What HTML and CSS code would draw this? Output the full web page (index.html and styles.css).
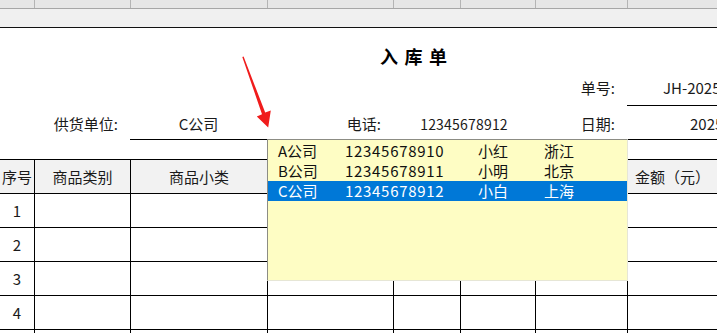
FILE: index.html
```html
<!DOCTYPE html>
<html lang="zh">
<head>
<meta charset="utf-8">
<title>入库单</title>
<link rel="stylesheet" href="styles.css">
</head>
<body>
<div class="sheet">
  <div class="colhead">
    <div class="ch"><span>C</span></div>
    <div class="ch"><span>D</span></div>
    <div class="ch"><span>E</span></div>
    <div class="ch"><span>F</span></div>
    <div class="ch"><span>G</span></div>
    <div class="ch"><span>H</span></div>
    <div class="ch"><span>I</span></div>
    <div class="ch"><span>J</span></div>
  </div>
  <div class="strip"></div>

  <div class="form">
    <div class="title-row"><span class="title">入库单</span></div>
    <div class="frow r-no">
      <div class="fc span6"></div>
      <div class="fc label">单号:</div>
      <div class="fc value line val-no">JH-20250101-001</div>
    </div>
    <div class="frow r-sup">
      <div class="fc label span2">供货单位:</div>
      <div class="fc value line center">C公司</div>
      <div class="fc label">电话:</div>
      <div class="fc value line center span2 digits">12345678912</div>
      <div class="fc label">日期:</div>
      <div class="fc value line val-date">2025-01-01</div>
    </div>
    <div class="gap"></div>
  </div>

  <div class="table">
    <div class="th">序号</div>
    <div class="th">商品类别</div>
    <div class="th">商品小类</div>
    <div class="th"></div>
    <div class="th"></div>
    <div class="th"></div>
    <div class="th"></div>
    <div class="th">金额（元）</div>

    <div class="td num">1</div><div class="td"></div><div class="td"></div><div class="td"></div><div class="td"></div><div class="td"></div><div class="td"></div><div class="td"></div>
    <div class="td num">2</div><div class="td"></div><div class="td"></div><div class="td"></div><div class="td"></div><div class="td"></div><div class="td"></div><div class="td"></div>
    <div class="td num">3</div><div class="td"></div><div class="td"></div><div class="td"></div><div class="td"></div><div class="td"></div><div class="td"></div><div class="td"></div>
    <div class="td num">4</div><div class="td"></div><div class="td"></div><div class="td"></div><div class="td"></div><div class="td"></div><div class="td"></div><div class="td"></div>
    <div class="td num">5</div><div class="td"></div><div class="td"></div><div class="td"></div><div class="td"></div><div class="td"></div><div class="td"></div><div class="td"></div>
  </div>

  <div class="popup">
    <div class="prow"><span class="p-co">A公司</span><span class="p-tel">12345678910</span><span class="p-name">小红</span><span class="p-city">浙江</span></div>
    <div class="prow"><span class="p-co">B公司</span><span class="p-tel">12345678911</span><span class="p-name">小明</span><span class="p-city">北京</span></div>
    <div class="prow selected"><span class="p-co">C公司</span><span class="p-tel">12345678912</span><span class="p-name">小白</span><span class="p-city">上海</span></div>
  </div>

  <svg class="arrow" width="40" height="80" viewBox="0 0 40 80">
    <polygon points="6.3,5 7.6,4.6 29.2,60.6 34.8,58.6 32.2,75.5 20.8,64.4 26.0,62.3" fill="#f01c1c"/>
  </svg>
</div>
</body>
</html>
```

FILE: styles.css
```css
* { box-sizing: border-box; }

html, body {
  margin: 0;
  padding: 0;
  background: #ffffff;
}

body {
  font-family: "Noto Sans CJK SC", "Noto Sans", sans-serif;
  font-size: 15px;
  color: #1a1a1a;
}

.sheet {
  --cols: 34px 96px 137px 126px 67px 75px 92px 90px;
  position: relative;
  width: 717px;
  height: 333px;
  overflow: hidden;
}

/* column header (cut off at the top) */
.colhead {
  display: grid;
  grid-template-columns: var(--cols);
  height: 9px;
  background: #e6e6e6;
  border-bottom: 1px solid #a6a6a6;
}

.ch {
  overflow: hidden;
  text-align: center;
  border-left: 1px solid #b4b4b4;
  color: #333;
  font-family: "Liberation Sans", sans-serif;
  font-size: 15px;
}

.ch:first-child { border-left: none; }

.ch span {
  display: block;
  line-height: 20px;
  margin-top: -15px;
}

.strip {
  height: 19px;
  background: #f0f0f0;
  border-bottom: 1px solid #111;
}

/* form area */
.title-row {
  height: 47px;
  padding-top: 17px;
  padding-left: 380px;
}

.title {
  display: block;
  font-size: 18px;
  font-weight: 700;
  line-height: 22px;
  letter-spacing: 6.5px;
  color: #000;
}

.frow {
  display: grid;
  grid-template-columns: var(--cols);
}

.r-no { height: 31px; }
.r-sup { height: 34px; }

.fc {
  white-space: nowrap;
  overflow: hidden;
  line-height: 20px;
  align-self: stretch;
  display: flex;
  align-items: flex-end;
}

.r-no .fc { padding-bottom: 8px; }
.r-sup .fc { padding-bottom: 6px; }

.span2 { grid-column: span 2; }
.span6 { grid-column: span 6; }

.label {
  justify-content: flex-end;
  padding-right: 12px;
}

.center { justify-content: center; }

.digits {
  font-size: 14px;
  letter-spacing: 0.2px;
}

.line { border-bottom: 1px solid #000; }

.r-no .line { padding-bottom: 7px; }
.r-sup .line { padding-bottom: 5px; }

.val-no { padding-left: 36px; }
.val-date { padding-left: 63px; }

.gap { height: 19px; }

/* table */
.table {
  display: grid;
  grid-template-columns: var(--cols);
  grid-auto-rows: 34px;
  border-top: 1px solid #000;
}

.th, .td {
  border-left: 1px solid #000;
  border-bottom: 1px solid #000;
  display: flex;
  align-items: center;
  justify-content: center;
  white-space: nowrap;
  overflow: hidden;
}

.th { background: #f2f2f2; }

.th:nth-child(8n+1), .td:nth-child(8n+1) { border-left: none; }

.num { font-size: 15px; }

/* dropdown list */
.popup {
  position: absolute;
  left: 267px;
  top: 139px;
  width: 361px;
  height: 142px;
  background: #fefdc4;
  border-top: 1px solid #8c8c84;
  border-left: 1px solid #8c8c84;
  border-right: 1px solid #e6e6d6;
  border-bottom: 1px solid #e6e6d6;
  padding-top: 1px;
  font-size: 15px;
  color: #111;
}

.prow {
  display: grid;
  grid-template-columns: 67px 133px 66px 1fr;
  height: 20px;
  line-height: 20px;
  padding-left: 10px;
  white-space: nowrap;
}

.p-tel { letter-spacing: 0.7px; }

.prow.selected {
  background: #0078d7;
  color: #fff;
}

.arrow {
  position: absolute;
  left: 236px;
  top: 52px;
  pointer-events: none;
}
```
